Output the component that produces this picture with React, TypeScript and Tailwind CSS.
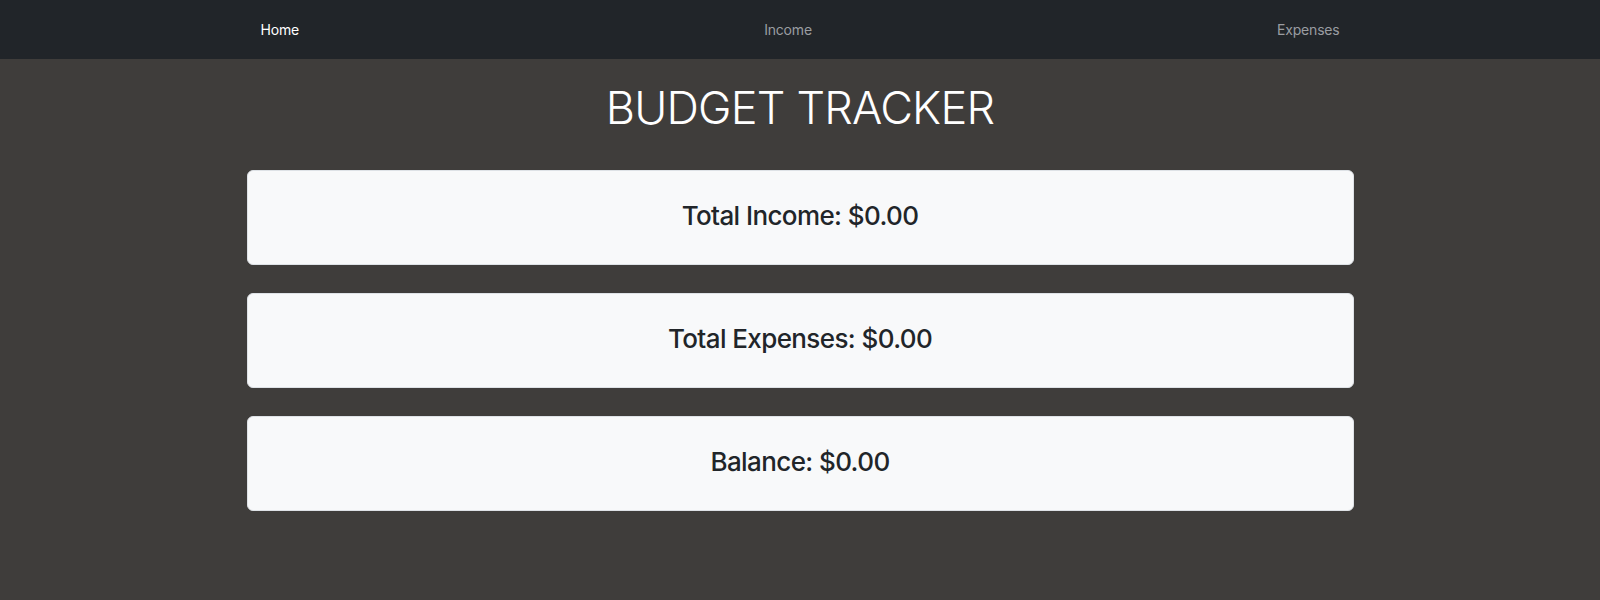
import React from 'react';

const totals = [
  { label: 'Total Income', value: 0 },
  { label: 'Total Expenses', value: 0 },
  { label: 'Balance', value: 0 },
];

export default function App() {
  return (
    <div className="min-h-screen bg-[#3f3d3b]" style={{ fontFamily: 'Inter, "Noto Sans", sans-serif' }}>
      <nav className="h-[59px] bg-[#212529] flex items-center pb-[1px]">
        <div className="w-[1079px] mx-auto flex justify-between text-[14px] tracking-[-0.2px]">
          <a href="#" className="text-white">Home</a>
          <a href="#" className="text-[#9a9da1]">Income</a>
          <a href="#" className="text-[#9a9da1]">Expenses</a>
        </div>
      </nav>

      <h1 className="mt-[22px] text-center text-white text-[45px] font-light leading-[1.2] tracking-[-0.8px]">
        BUDGET TRACKER
      </h1>

      <div className="w-[1107px] mx-auto mt-[35px] flex flex-col gap-[28px]">
        {totals.map((t) => (
          <div
            key={t.label}
            className="h-[95px] bg-[#f8f9fa] border border-[#dee2e6] rounded-md flex items-center justify-center pb-[4px]"
          >
            <h3 className="text-[26px] font-medium text-[#212529] leading-[1.2] tracking-[-0.6px]">
              {t.label}: ${t.value.toFixed(2)}
            </h3>
          </div>
        ))}
      </div>
    </div>
  );
}
